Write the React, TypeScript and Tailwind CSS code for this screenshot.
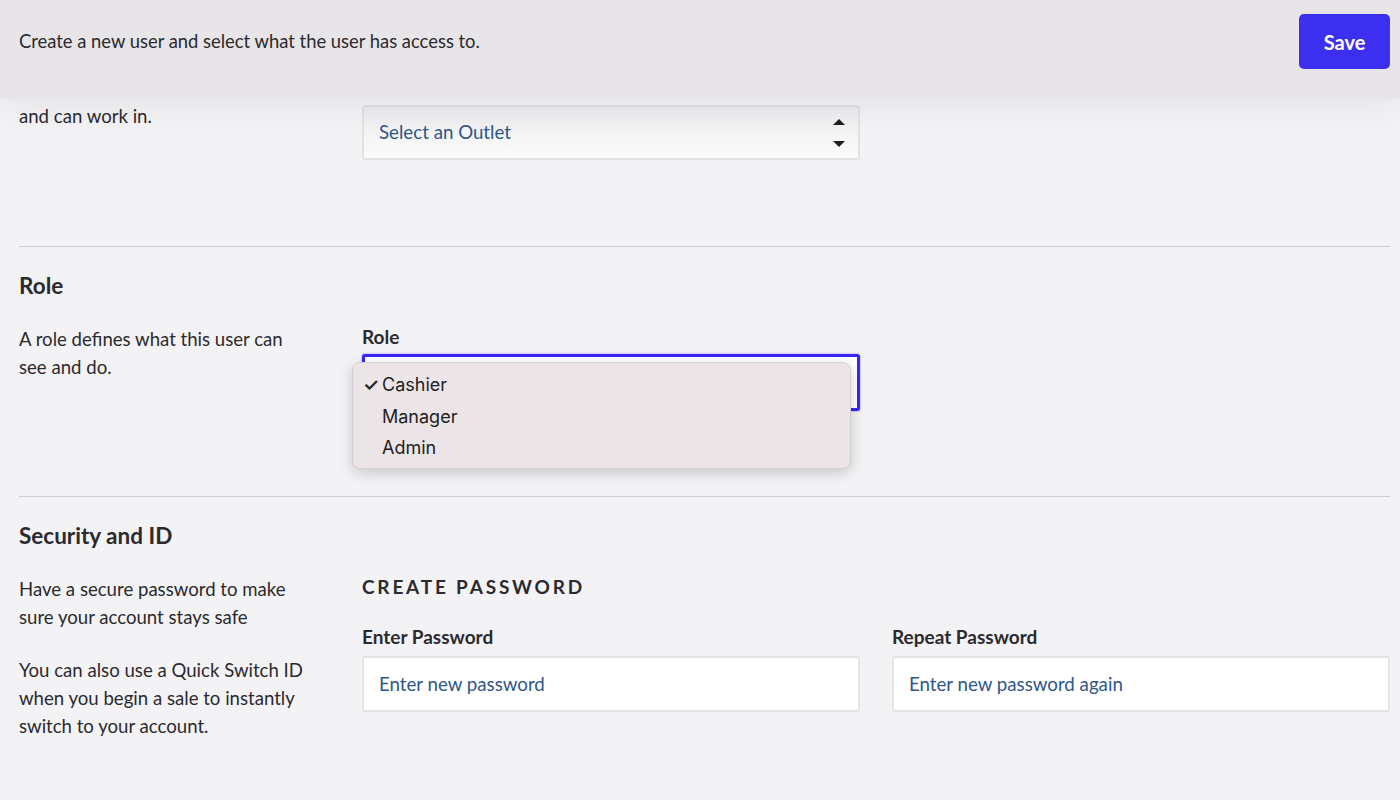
function Arrows() {
  return (
    <svg width="14" height="36" viewBox="0 0 14 36" className="text-[#1f1f22]">
      <path d="M1 10 L7 4 L13 10 Z" fill="currentColor" />
      <path d="M1 26 L7 32 L13 26 Z" fill="currentColor" />
    </svg>
  )
}

function TextInput({ label, placeholder }: { label: string; placeholder: string }) {
  return (
    <div className="w-[498px]">
      <div className="text-[19px] leading-[24px] font-bold text-[#2b2a2e]">{label}</div>
      <div className="mt-[7px] h-[56px] rounded-[3px] border-2 border-[#e4e3e6] bg-white flex items-center px-[15px] text-[18.7px] text-[#2f5787]">
        {placeholder}
      </div>
    </div>
  )
}

function RoleMenu() {
  const items = ["Cashier", "Manager", "Admin"]
  return (
    <div
      className="absolute left-[-13px] top-[5px] w-[499px] h-[107px] rounded-[8px] bg-[#ebe5e8] border border-[#d3cfd2] shadow-[0_4px_14px_rgba(0,0,0,0.18)] pt-[6px]"
      style={{ fontFamily: "Inter, 'Noto Sans', sans-serif" }}
    >
      {items.map((item, i) => (
        <div key={item} className="flex items-center h-[31.5px] text-[18px] text-[#222]">
          <span className="w-[29px] pl-[10px] text-[18px] font-semibold">{i === 0 ? "✓" : ""}</span>
          <span>{item}</span>
        </div>
      ))}
    </div>
  )
}

export default function App() {
  return (
    <div
      className="min-h-[800px] h-[800px] overflow-hidden bg-[#f3f2f5] text-[#2b2a2e]"
      style={{ fontFamily: "Lato, 'Open Sans', sans-serif" }}
    >
      <header className="relative z-10 h-[99px] bg-[#e7e5e8] flex items-start justify-between pt-[14px] pl-[19px] pr-[10px] shadow-[0_6px_40px_rgba(0,0,0,0.07)]">
        <p className="h-[55px] flex items-center text-[18.4px] text-[#2b2a2e]">Create a new user and select what the user has access to.</p>
        <button className="w-[91px] h-[55px] rounded-[5px] bg-[#3d2ff0] text-white text-[20px] font-bold">Save</button>
      </header>

      <main className="pl-[19px] pr-[10px]">
        {/* outlet section (scrolled) */}
        <section className="flex pb-[86px]">
          <div className="w-[343px] pt-[3px] text-[18.6px] leading-[28px]">and can work in.</div>
          <div className="w-[498px] mt-[6px] h-[55px] rounded-[3px] border-2 border-[#e2e1e4] bg-gradient-to-b from-[#ecebee] to-[#fbfbfb] flex items-center justify-between pl-[15px] pr-[12px] text-[18.7px] text-[#2f5787]">
            <span>Select an Outlet</span>
            <Arrows />
          </div>
        </section>

        <div className="border-t border-[#cfcdd1]" />

        {/* role */}
        <section className="pt-[25px] pb-[85px]">
          <h2 className="text-[22.5px] leading-[28px] font-bold">Role</h2>
          <div className="flex mt-[25px]">
            <div className="w-[343px]">
              <p className="w-[286px] text-[18.6px] leading-[28px]">A role defines what this user can see and do.</p>
            </div>
            <div className="w-[498px]">
              <div className="text-[19px] leading-[24px] font-bold">Role</div>
              <div className="relative mt-[5px] h-[57px] rounded-[3px] border-[3px] border-[#3b25f5] bg-white shadow-[0_0_2px_rgba(59,37,245,0.6)]">
                <RoleMenu />
              </div>
            </div>
          </div>
        </section>

        <div className="border-t border-[#cfcdd1]" />

        {/* security */}
        <section className="pt-[25px]">
          <h2 className="text-[22.5px] leading-[28px] font-bold">Security and ID</h2>
          <div className="flex mt-[25px]">
            <div className="w-[343px]">
              <div className="w-[286px] text-[18.6px] leading-[28px]">
                <p>Have a secure password to make sure your account stays safe</p>
                <p className="mt-[25px]">You can also use a Quick Switch ID when you begin a sale to instantly switch to your account.</p>
              </div>
            </div>
            <div>
              <div className="text-[19px] leading-[24px] font-bold tracking-[2.8px]">CREATE PASSWORD</div>
              <div className="flex gap-[32px] mt-[26px]">
                <TextInput label="Enter Password" placeholder="Enter new password" />
                <TextInput label="Repeat Password" placeholder="Enter new password again" />
              </div>
            </div>
          </div>
        </section>
      </main>
    </div>
  )
}
